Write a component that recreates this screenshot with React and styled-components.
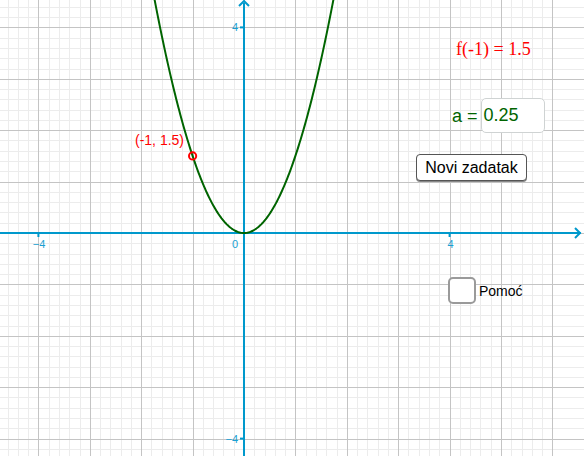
import React from "react";
import styled, { createGlobalStyle } from "styled-components";

const W = 584;
const H = 456;
const OX = 244;
const OY = 233;
const U = 51.4;

const px = (x) => OX + x * U;
const py = (y) => OY - y * U;

const GlobalStyle = createGlobalStyle`
  html, body {
    margin: 0;
    padding: 0;
    background: #ffffff;
    overflow: hidden;
  }
  body {
    font-family: "Liberation Sans", Arial, sans-serif;
  }
`;

const Canvas = styled.div`
  position: relative;
  width: ${W}px;
  height: ${H}px;
  background: #ffffff;
  overflow: hidden;
`;

const Graph = styled.svg`
  display: block;
  width: ${W}px;
  height: ${H}px;
`;

const AxisLabel = styled.text`
  font-family: "Liberation Sans", Arial, sans-serif;
  font-size: 11px;
  fill: #1a9fd2;
`;

const PointLabel = styled.text`
  font-family: "Liberation Sans", Arial, sans-serif;
  font-size: 14px;
  fill: #ff0000;
`;

const FunctionValue = styled.div`
  position: absolute;
  left: 456px;
  top: 40px;
  font-family: "Liberation Serif", "Times New Roman", serif;
  font-size: 18px;
  line-height: 18px;
  color: #ff0000;
  white-space: nowrap;
`;

const InputRow = styled.div`
  position: absolute;
  left: 452px;
  top: 98px;
  display: flex;
  align-items: center;
  gap: 3px;
  color: #006400;
  font-size: 18px;
`;

const InputLabel = styled.span`
  line-height: 18px;
  white-space: nowrap;
`;

const InputBox = styled.div`
  box-sizing: border-box;
  width: 64px;
  height: 35px;
  padding: 0 2px;
  display: flex;
  align-items: center;
  border: 1px solid #cfd3d3;
  border-radius: 5px;
  background: #ffffff;
  color: #006400;
`;

const Button = styled.button`
  position: absolute;
  left: 416px;
  top: 154px;
  box-sizing: border-box;
  width: 111px;
  height: 27px;
  padding: 0;
  border: 1px solid #555555;
  border-radius: 4px;
  background: #ffffff;
  box-shadow: 0 1px 0 #888888;
  font-family: "Liberation Sans", Arial, sans-serif;
  font-size: 16px;
  color: #000000;
  cursor: pointer;
`;

const CheckRow = styled.label`
  position: absolute;
  left: 448px;
  top: 277px;
  display: flex;
  align-items: center;
  gap: 3px;
  font-size: 14px;
  color: #000000;
`;

const CheckBox = styled.span`
  box-sizing: border-box;
  width: 28px;
  height: 27px;
  border: 2px solid #9a9a9a;
  border-radius: 5px;
  background: #ffffff;
`;

function GridLines() {
  const lines = [];
  for (let i = -30; i <= 30; i++) {
    const x = Math.round(OX + (i * U) / 5) + 0.5;
    if (x < 0 || x > W) continue;
    const major = i % 5 === 0;
    lines.push(
      <line
        key={"v" + i}
        x1={x}
        y1={0}
        x2={x}
        y2={H}
        stroke={major ? "#c4c4c4" : "#ececec"}
        strokeWidth={1}
      />
    );
  }
  for (let j = -30; j <= 30; j++) {
    const y = Math.round(OY - (j * U) / 5) + 0.5;
    if (y < 0 || y > H) continue;
    const major = j % 5 === 0;
    lines.push(
      <line
        key={"h" + j}
        x1={0}
        y1={y}
        x2={W}
        y2={y}
        stroke={major ? "#c4c4c4" : "#ececec"}
        strokeWidth={1}
      />
    );
  }
  // draw minor lines first, major on top
  lines.sort((a, b) => (a.props.stroke === "#c4c4c4" ? 1 : 0) - (b.props.stroke === "#c4c4c4" ? 1 : 0));
  return <g>{lines}</g>;
}

function Parabola() {
  const pts = [];
  for (let x = -1.8; x <= 1.8001; x += 0.02) {
    pts.push(`${px(x).toFixed(2)},${py(1.5 * x * x).toFixed(2)}`);
  }
  return (
    <polyline
      points={pts.join(" ")}
      fill="none"
      stroke="#006400"
      strokeWidth={2}
      strokeLinejoin="round"
    />
  );
}

function Axes() {
  const blue = "#0099cc";
  const ticksX = [-4, 4];
  const ticksY = [-4, 4];
  return (
    <g>
      <line x1={0} y1={OY} x2={W - 3} y2={OY} stroke={blue} strokeWidth={2} />
      <line x1={OX} y1={3} x2={OX} y2={H} stroke={blue} strokeWidth={2} />
      <polyline
        points={`${W - 9},${OY - 5} ${W - 4},${OY} ${W - 9},${OY + 5}`}
        fill="none"
        stroke={blue}
        strokeWidth={2}
      />
      <polyline
        points={`${OX - 5},6 ${OX},1 ${OX + 5},6`}
        fill="none"
        stroke={blue}
        strokeWidth={2}
      />
      {ticksX.map((t) => (
        <line key={"tx" + t} x1={px(t)} y1={OY} x2={px(t)} y2={OY + 4} stroke={blue} strokeWidth={2} />
      ))}
      {ticksY.map((t) => (
        <line key={"ty" + t} x1={OX - 4} y1={py(t)} x2={OX} y2={py(t)} stroke={blue} strokeWidth={2} />
      ))}
      <AxisLabel x={px(-4) + 7} y={OY + 15} textAnchor="end">−4</AxisLabel>
      <AxisLabel x={OX - 6} y={OY + 15} textAnchor="end">0</AxisLabel>
      <AxisLabel x={px(4) + 1} y={OY + 15} textAnchor="middle">4</AxisLabel>
      <AxisLabel x={OX - 6} y={py(4) + 4} textAnchor="end">4</AxisLabel>
      <AxisLabel x={OX - 6} y={py(-4) + 4} textAnchor="end">−4</AxisLabel>
    </g>
  );
}

export default function App() {
  return (
    <>
      <GlobalStyle />
      <Canvas>
        <Graph viewBox={`0 0 ${W} ${H}`}>
          <GridLines />
          <Axes />
          <Parabola />
          <circle cx={px(-1)} cy={py(1.5)} r={3.6} fill="none" stroke="#ff0000" strokeWidth={2} />
          <PointLabel x={135} y={145}>(-1, 1.5)</PointLabel>
        </Graph>

        <FunctionValue>f(-1) = 1.5</FunctionValue>

        <InputRow>
          <InputLabel>a =</InputLabel>
          <InputBox>0.25</InputBox>
        </InputRow>

        <Button>Novi zadatak</Button>

        <CheckRow>
          <CheckBox />
          Pomoć
        </CheckRow>
      </Canvas>
    </>
  );
}
